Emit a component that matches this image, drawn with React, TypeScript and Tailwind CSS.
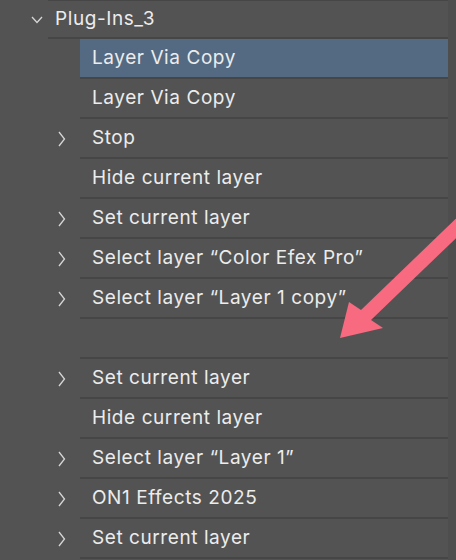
type Row = { label: string; expandable: boolean; selected?: boolean };

const rows: Row[] = [
  { label: "Layer Via Copy", expandable: false, selected: true },
  { label: "Layer Via Copy", expandable: false },
  { label: "Stop", expandable: true },
  { label: "Hide current layer", expandable: false },
  { label: "Set current layer", expandable: true },
  { label: "Select layer \u201cColor Efex Pro\u201d", expandable: true },
  { label: "Select layer \u201cLayer 1 copy\u201d", expandable: true },
  { label: "", expandable: false },
  { label: "Set current layer", expandable: true },
  { label: "Hide current layer", expandable: false },
  { label: "Select layer \u201cLayer 1\u201d", expandable: true },
  { label: "ON1 Effects 2025", expandable: true },
  { label: "Set current layer", expandable: true },
];

function Chevron({ down }: { down?: boolean }) {
  if (down) {
    return (
      <svg width="12" height="8" viewBox="0 0 12 8" className="shrink-0">
        <polyline points="1,1 6,6.5 11,1" fill="none" stroke="#d6d6d6" strokeWidth="1.3" />
      </svg>
    );
  }
  return (
    <svg width="8" height="16" viewBox="0 0 8 16" className="shrink-0">
      <polyline points="1,1 6.5,8 1,15" fill="none" stroke="#d6d6d6" strokeWidth="1.3" />
    </svg>
  );
}

export default function App() {
  return (
    <div
      className="relative flex w-[456px] h-[560px] overflow-hidden bg-[#535353] text-[#ececec] text-[19px] tracking-[0.03em]"
      style={{ fontFamily: "Inter, 'Noto Sans', sans-serif" }}
    >
      <div className="flex-1 flex flex-col">
        <div className="ml-[48px] border-t border-[#464646]" />
        <div className="flex items-center h-[39px] -mt-px">
          <div className="w-[48px] flex justify-start pl-[31px] pt-[1px]">
            <Chevron down />
          </div>
          <div className="flex-1 h-full flex items-center pl-[7px] pt-[2px] border-b-2 border-[#464646]">
            Plug-Ins_3
          </div>
        </div>
        {rows.map((row, i) => (
          <div key={i} className="flex h-[40px]">
            <div className="w-[80px] flex items-center pl-[58px]">
              {row.expandable && <Chevron />}
            </div>
            <div
              className={
                "flex-1 flex items-center pl-[12px] pt-[1px] border-b-2 border-[#464646] " +
                (row.selected ? "bg-[#536a82]" : "")
              }
            >
              {row.label}
            </div>
          </div>
        ))}
      </div>
      <div className="w-[8px] bg-[#4e4e4e]" />
      <svg
        className="absolute inset-0 pointer-events-none"
        width="456"
        height="560"
        viewBox="0 0 456 560"
      >
        <polygon
          points="340,338 349,302 361,310 469,206 479,216 371,320 383,328"
          fill="#f86a80"
        />
      </svg>
    </div>
  );
}
